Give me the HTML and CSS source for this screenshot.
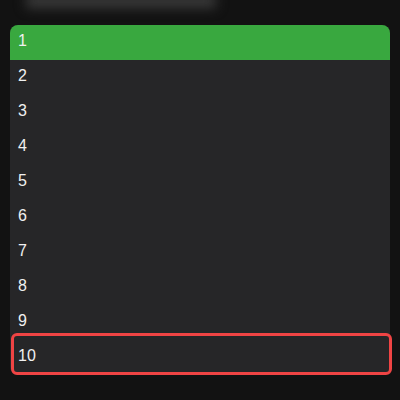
FILE: index.html
```html
<!DOCTYPE html>
<html>
<head>
<meta charset="utf-8">
<link rel="stylesheet" href="styles.css">
</head>
<body>
<div class="page">
  <div class="top"><div class="ghost"></div></div>
  <div class="list">
    <div class="row active">1</div>
    <div class="row">2</div>
    <div class="row">3</div>
    <div class="row">4</div>
    <div class="row">5</div>
    <div class="row">6</div>
    <div class="row">7</div>
    <div class="row">8</div>
    <div class="row">9</div>
    <div class="row target">10</div>
  </div>
</div>
</body>
</html>
```
FILE: styles.css
```css
html, body {
  margin: 0;
  padding: 0;
  background: #121212;
  height: 100%;
  overflow: hidden;
}
.page {
  padding: 0 10px;
  font-family: "Liberation Sans", Arial, sans-serif;
}
.top {
  height: 25px;
  overflow: hidden;
}
.ghost {
  width: 190px;
  height: 14px;
  margin: -6px 0 0 16px;
  background: #3a3a3a;
  filter: blur(6px);
}
.list {
  background: #262628;
  border-radius: 8px;
}
.row {
  height: 35px;
  box-sizing: border-box;
  padding: 4px 8px 0;
  line-height: 24px;
  font-size: 16px;
  color: #f0f0f0;
}
.row.active {
  background: #39a83f;
  border-radius: 8px 8px 0 0;
}
.row.target {
  position: relative;
}
.row.target::after {
  content: "";
  position: absolute;
  top: -7px;
  left: 1px;
  right: -2px;
  bottom: 0;
  border: 3px solid #ef4444;
  border-radius: 6px;
}
```
